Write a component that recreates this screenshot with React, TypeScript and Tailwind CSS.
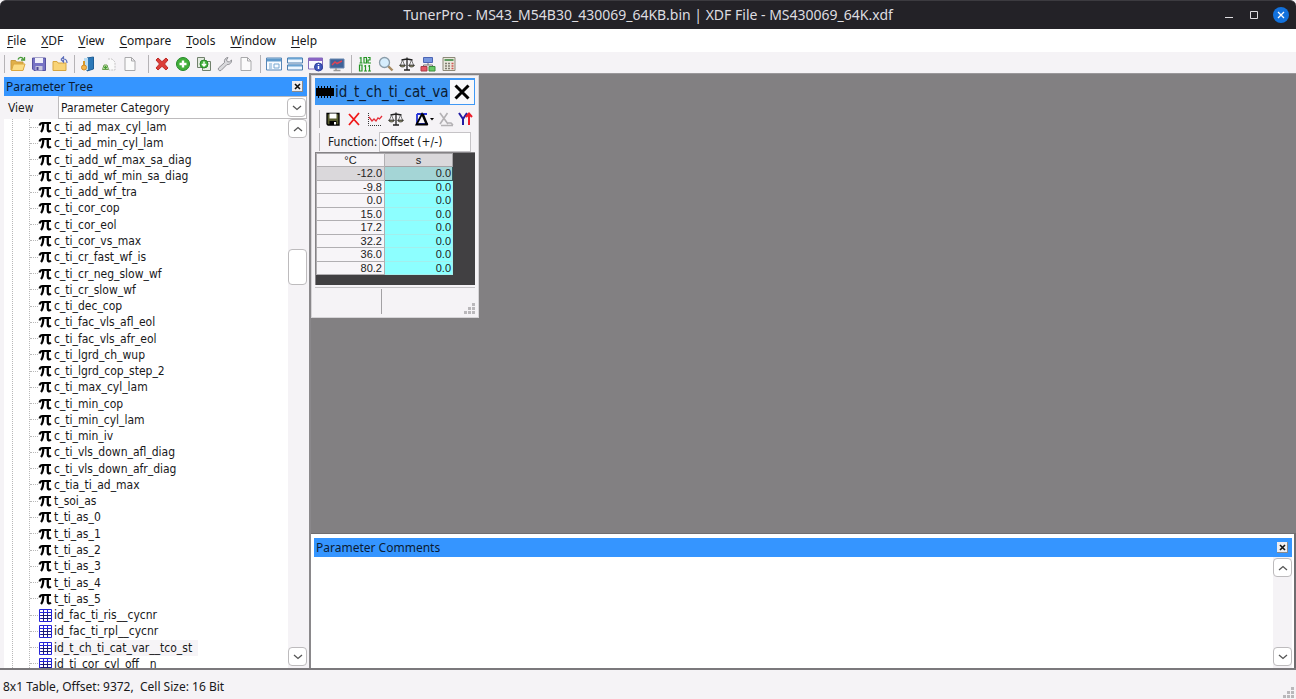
import type { ReactNode } from 'react';

const parameters = [
  'c_ti_ad_max_cyl_lam', 'c_ti_ad_min_cyl_lam', 'c_ti_add_wf_max_sa_diag', 'c_ti_add_wf_min_sa_diag',
  'c_ti_add_wf_tra', 'c_ti_cor_cop', 'c_ti_cor_eol', 'c_ti_cor_vs_max', 'c_ti_cr_fast_wf_is',
  'c_ti_cr_neg_slow_wf', 'c_ti_cr_slow_wf', 'c_ti_dec_cop', 'c_ti_fac_vls_afl_eol', 'c_ti_fac_vls_afr_eol',
  'c_ti_lgrd_ch_wup', 'c_ti_lgrd_cop_step_2', 'c_ti_max_cyl_lam', 'c_ti_min_cop', 'c_ti_min_cyl_lam',
  'c_ti_min_iv', 'c_ti_vls_down_afl_diag', 'c_ti_vls_down_afr_diag', 'c_tia_ti_ad_max', 't_soi_as',
  't_ti_as_0', 't_ti_as_1', 't_ti_as_2', 't_ti_as_3', 't_ti_as_4', 't_ti_as_5',
];
const tables = ['id_fac_ti_ris__cycnr', 'id_fac_ti_rpl__cycnr', 'id_t_ch_ti_cat_var__tco_st', 'id_ti_cor_cyl_off__n'];
const selectedTable = 'id_t_ch_ti_cat_var__tco_st';
const menus = ['File', 'XDF', 'View', 'Compare', 'Tools', 'Window', 'Help'];
const cells = [
  ['-12.0', '0.0'], ['-9.8', '0.0'], ['0.0', '0.0'], ['15.0', '0.0'],
  ['17.2', '0.0'], ['32.2', '0.0'], ['36.0', '0.0'], ['80.2', '0.0'],
];

function Icon({ children }: { children: ReactNode }) {
  return (
    <svg viewBox="0 0 16 16" className="size-4 shrink-0" fill="none" aria-hidden="true">
      {children}
    </svg>
  );
}

const folder = (
  <>
    <path d="M1 14V4.500h4.500l1 1.500H13v8z" fill="#e0b04a" stroke="#c99a3c" />
    <path d="M1.500 14.500 3.500 8H15l-2 6.500z" fill="#fbdc85" stroke="#dba840" />
  </>
);
const page = <path d="M3 1.500h6.500L13 5v9.500H3zM9.500 1.500V5H13" fill="#fbfbfb" stroke="#a9a9ab" />;
const scales = (
  <>
    <path d="M8 1.500v12M2.500 4 8 3l5.500 1M5 14h6" stroke="#222" strokeWidth="1.300" />
    <path d="M3.500 4 1.500 9M3.500 4l2 5M12.500 4l-2 5M12.500 4l2 5" stroke="#555" strokeWidth=".8" />
    <path d="M.7 9.200h5.600c-.6 2.200-5 2.200-5.600 0zM9.700 9.200h5.600c-.6 2.200-5 2.200-5.600 0z" fill="#d9d78a" stroke="#222" />
  </>
);

const toolbarGroups: { label: string; icon: ReactNode }[][] = [
  [
    { label: 'Open bin', icon: <>{folder}<path d="M8 3.500C9 1 12 .5 13.500 3.500M14.500 1v3H11" stroke="#4a9b3b" strokeWidth="1.300" /></> },
    { label: 'Save bin', icon: <><path d="M1.500 2h13v12.500H3L1.500 13z" fill="#7773c4" stroke="#5652a0" /><path d="M4 2h8v5H4z" fill="#f0f0fa" /><path d="M4.500 10h7v4.500h-7z" fill="#c9c8de" /><path d="M5.500 11h2v3h-2z" fill="#4b4793" /></> },
    { label: 'Close bin', icon: <><path d="M1 14V5.500h4l1 1.500h8v7.500H1z" fill="#f8d377" stroke="#d7a640" /><path d="M9 3.500 11.500 1v2c2 0 3.500 1 3.500 4M9 3.500 11.500 6V4" stroke="#5a6cb8" strokeWidth="1.200" /></> },
  ],
  [
    { label: 'Open XDF', icon: <><path d="M7 2l6.500-1v12L7 15z" fill="#2c78b8" stroke="#1f5f98" /><path d="M4 2h4v12H4z" fill="#b9dcf2" /><path d="M4 5v5" stroke="#d89a2a" strokeWidth="2" /><circle cx="4" cy="11.500" r="2.500" fill="#f5b64a" stroke="#d08a28" /></> },
    { label: 'New XDF', icon: <><path d="M7 3h4l3 3v8H8" fill="#fafafa" stroke="#c4c4c4" strokeDasharray="2 1" /><path d="M1.500 13.500 3 9h3l1.500 4.500z" fill="#d8edc8" stroke="#6a9e4e" /><path d="M4.500 10v3M3 11.500h3" stroke="#449e31" strokeWidth="1.300" /></> },
    { label: 'New page', icon: page },
  ],
  [
    { label: 'Delete', icon: <path d="m2 4 2-2 4 3.700L12 2l2 2-3.500 4 3.500 4-2 2-4-3.700L4 14l-2-2 3.500-4z" fill="#dc3e38" stroke="#bf2a27" /> },
    { label: 'Add', icon: <><circle cx="8" cy="8" r="6.500" fill="#42af3a" stroke="#258829" /><path d="M8 4.500v7M4.500 8h7" stroke="#fff" strokeWidth="2.400" /></> },
    { label: 'Duplicate', icon: <><path d="M1.500 1.500h7v10h-7z" fill="#e2ebdf" stroke="#71806c" /><path d="M6.500 5.500h8v9h-8z" fill="#e9efe5" stroke="#71806c" /><circle cx="8" cy="8" r="4" fill="#45b43d" stroke="#2c882b" /><path d="M8 5.500V10M6 8l2 2 2-2" stroke="#fff" strokeWidth="1.400" /></> },
    { label: 'Settings', icon: <path d="m1.500 12 6-5.500c-.7-2.500 1-5 3.500-5L9.500 4l1 1.800h2L14.500 4c.5 2.700-2 5-4.500 4.500L4 14.500c-1.500 1-3.500-1-2.500-2.500z" fill="#d9d9dc" stroke="#929297" /> },
    { label: 'Blank document', icon: page },
  ],
  [
    { label: 'Tree pane', icon: <><path d="M.5 2h15v12H.5z" fill="#f7fbff" stroke="#5787b8" /><path d="M1 2.500h14v3H1z" fill="#609acb" /><path d="M3 8h3M3 10h3M3 12h3M8 8h5v4H8z" stroke="#78a9d2" /></> },
    { label: 'Split panes', icon: <><path d="M.5 2h15v5H.5zM.5 9h15v5H.5z" fill="#eef7ff" stroke="#4e7fae" /><path d="M1 2.500h14M1 9.500h14" stroke="#6ba4d3" strokeWidth="2" /></> },
    { label: 'Information', icon: <><path d="M.5 2h14v11H.5z" fill="#faf9ff" stroke="#836dbb" /><path d="M1 3.500h13" stroke="#8b65c4" strokeWidth="3" /><circle cx="10.500" cy="11" r="4" fill="#4056bd" stroke="#31449a" /><path d="M10.500 10v3M10.500 8v1" stroke="#fff" strokeWidth="1.500" /></> },
    { label: 'Monitor', icon: <><path d="M1 3h14v9H1z" fill="#3f6299" stroke="#6686ae" /><path d="m3 9 3-3 2 1.500L13 5" stroke="#df4355" strokeWidth="1.500" /><path d="M7 12v2M4.500 14.500h7" stroke="#999" strokeWidth="1.500" /></> },
  ],
  [
    { label: 'Hex editor', icon: <path d="M4 1v6M2.500 2H4M2.500 7h3M7 1.500h2.500V7H7zM11 1.500h2v2.500h-2v3h3M2.500 9H5v6H2.500zM8.500 9v6M7 10h1.500M7 15h3M12.500 9v6M11 10h1.500M11 15h3" stroke="#259525" strokeWidth="1.200" /> },
    { label: 'Find', icon: <><path d="m10 10 4.500 4.500" stroke="#a78a61" strokeWidth="2.400" /><circle cx="6.500" cy="6.500" r="5" fill="#d6edfc" stroke="#8a9ca9" strokeWidth="1.300" /></> },
    { label: 'Compare', icon: scales },
    { label: 'Diagram', icon: <><path d="M3.500 1.500h9v5h-9z" fill="#7797de" stroke="#4c65b5" /><path d="M8 7v2M3.500 11V9h9v2" stroke="#777" /><path d="M1 10.500h6v4.500H1z" fill="#e45867" stroke="#a83b45" /><path d="M9 10.500h6v4.500H9z" fill="#69ca68" stroke="#3b8d3b" /></> },
    { label: 'Calculator', icon: <><path d="M2 1.500h12v13H2z" fill="#e9e7dc" stroke="#8d8978" /><path d="M3.500 3h9v2h-9z" fill="#5f9a60" /><path d="M4 7.500h2M7 7.500h2M4 10h2M7 10h2M4 12.500h2M7 12.500h2" stroke="#817d70" strokeWidth="1.300" /><path d="M10.500 7.500h2M10.500 10h2M10.500 12.500h2" stroke="#cf5650" strokeWidth="1.300" /></> },
  ],
];

function Grip() {
  return <span className="h-[18px] w-px shrink-0 bg-[#b5b3b6]" />;
}

function PiIcon() {
  return (
    <svg viewBox="0 0 14 12" className="h-3 w-3.5 shrink-0" fill="none" stroke="#000" aria-hidden="true">
      <path d="M1.500 4.500C2 2.500 3 2 4.500 2H13" strokeWidth="2" />
      <path d="M5.300 2c0 4-.5 7-2.300 9M9.800 2v6.500c0 2 1.500 2.500 3 1" strokeWidth="2.300" />
    </svg>
  );
}

function GridIcon() {
  return (
    <svg viewBox="0 0 14 14" className="size-3.5 shrink-0" fill="#fff" aria-hidden="true">
      <path d="M1.500 1.500h12v12h-12zM5.500 1v12M9.500 1v12M1 4.500h12M1 7.500h12M1 10.500h12" stroke="#2524d8" />
      <path d="M5.500 5v8M9.500 5v8M3 7.500h10M3 10.500h10" stroke="#16165c" strokeWidth=".7" />
    </svg>
  );
}

function Chevron({ up = false }: { up?: boolean }) {
  return (
    <svg viewBox="0 0 10 6" className="h-1.5 w-2.5" fill="none" stroke="#555" strokeWidth="1.300" aria-hidden="true">
      <path d={up ? 'm1 5 4-3.500L9 5' : 'm1 1 4 3.500L9 1'} />
    </svg>
  );
}

function ScrollButton({ up = false }: { up?: boolean }) {
  return (
    <button aria-label={up ? 'Scroll up' : 'Scroll down'} className="flex size-[19px] shrink-0 items-center justify-center rounded-sm border border-[#bdbbbd] bg-white">
      <Chevron up={up} />
    </button>
  );
}

function PaneHeader({ title }: { title: string }) {
  return (
    <header className="flex h-[19px] shrink-0 items-center justify-between bg-[#3595ff] pr-1 pl-0.5">
      <h2 className="font-['Noto_Sans','Open_Sans',sans-serif] text-[12px] leading-4 text-[#0b1c33]">{title}</h2>
      <button aria-label={`Close ${title}`} className="flex size-[11px] items-center justify-center border-r border-b border-[#8a8a8a] bg-[#efedef]">
        <svg viewBox="0 0 7 7" className="size-[7px]" stroke="#111" strokeWidth="1.600" aria-hidden="true"><path d="m1 1 5 5M6 1 1 6" /></svg>
      </button>
    </header>
  );
}

function SizeGrip() {
  return (
    <svg viewBox="0 0 11 11" className="size-[11px]" fill="#bab8bb" aria-hidden="true">
      <path d="M8 0h3v3H8zM4 4h3v3H4zM8 4h3v3H8zM0 8h3v3H0zM4 8h3v3H4zM8 8h3v3H8z" />
    </svg>
  );
}

function TitleBar() {
  return (
    <div className="grid h-[29px] shrink-0 grid-cols-[1fr_auto_1fr] items-center rounded-t-md border-t border-[#3c3b40] bg-[#232227] pb-px text-[#dedde0]">
      <h1 className="col-start-2 font-['Noto_Sans','Open_Sans',sans-serif] text-[14px] leading-5">TunerPro - MS43_M54B30_430069_64KB.bin | XDF File - MS430069_64K.xdf</h1>
      <div className="flex items-center justify-end gap-[13px] pr-[7px]">
        <button aria-label="Minimize" className="flex h-4 w-3 items-center justify-center">
          <svg viewBox="0 0 12 12" className="size-3" stroke="currentColor" aria-hidden="true"><path d="M2 8.500h8" /></svg>
        </button>
        <button aria-label="Maximize" className="flex h-4 w-3 items-center justify-center">
          <svg viewBox="0 0 12 12" className="size-3" fill="none" stroke="currentColor" aria-hidden="true"><path d="M2.500 2.500h7v7h-7z" /></svg>
        </button>
        <button aria-label="Close" className="flex size-4 items-center justify-center rounded-full bg-[#1271dc]">
          <svg viewBox="0 0 8 8" className="size-2" stroke="#fff" strokeWidth="1.300" aria-hidden="true"><path d="m1 1 6 6M7 1 1 7" /></svg>
        </button>
      </div>
    </div>
  );
}

function MenuBar() {
  return (
    <nav className="flex h-[23px] shrink-0 items-center gap-[15px] bg-white pl-[7px] font-['Noto_Sans','Open_Sans',sans-serif] text-[12px] leading-4">
      {menus.map((name) => (
        <button key={name}><span className="underline underline-offset-2">{name[0]}</span>{name.slice(1)}</button>
      ))}
    </nav>
  );
}

function Toolbar() {
  return (
    <div className="flex h-[21px] shrink-0 items-end gap-1 pl-1">
      {toolbarGroups.map((group, i) => (
        <div key={i} className={i === 1 ? 'flex items-center gap-0.5 pr-1' : 'flex items-center gap-0.5'}>
          <Grip />
          <div className="flex">
            {group.map(({ label, icon }) => (
              <button key={label} aria-label={label} className="flex h-[18px] w-[21px] items-center justify-center"><Icon>{icon}</Icon></button>
            ))}
          </div>
        </div>
      ))}
    </div>
  );
}

function TreeRow({ name, table = false }: { name: string; table?: boolean }) {
  return (
    <li className="flex min-h-0 items-center whitespace-nowrap">
      <span className="w-2 shrink-0 border-t border-dotted border-[#b8b8b8]" />
      <button className="flex items-center gap-0.5">
        {table ? <GridIcon /> : <PiIcon />}
        <span className={name === selectedTable ? 'bg-[#f6f4f7] pr-1.5' : ''}>{name}</span>
      </button>
    </li>
  );
}

function ParameterTree() {
  return (
    <aside className="flex w-[311px] shrink-0 flex-col border-r-2 border-[#8a888b] pt-1 pr-0.5 pl-1">
      <PaneHeader title="Parameter Tree" />
      <div className="flex h-[23px] shrink-0 items-center">
        <label htmlFor="view" className="w-[54px] pl-1 text-[12px] leading-4">View</label>
        <div className="flex h-full flex-1 items-center border border-[#bdbbbd] bg-white">
          <select id="view" className="min-w-0 flex-1 appearance-none bg-transparent pl-0.5 text-[12px] leading-4">
            <option>Parameter Category</option>
          </select>
          <span className="flex size-[19px] items-center justify-center rounded-sm border border-[#bdbbbd]"><Chevron /></span>
        </div>
      </div>
      <div className="flex min-h-0 flex-1 bg-white">
        <div className="min-w-0 flex-1 overflow-hidden pl-2">
          <div className="border-l border-dotted border-[#b8b8b8] pl-4">
            <ul className="grid h-[553px] auto-rows-fr border-l border-dotted border-[#b8b8b8] text-[12px] leading-4">
              {parameters.map((name) => <TreeRow key={name} name={name} />)}
              {tables.map((name) => <TreeRow key={name} name={name} table />)}
            </ul>
          </div>
        </div>
        <div className="flex flex-col bg-[#f5f3f6] pb-0.5">
          <ScrollButton up />
          <div className="grid flex-1 grid-rows-[111fr_36fr_362fr]">
            <span className="row-start-2 rounded-sm border border-[#bdbbbd] bg-white" />
          </div>
          <ScrollButton />
        </div>
      </div>
    </aside>
  );
}

const tableTools: { label: string; icon: ReactNode }[] = [
  { label: 'Save table', icon: <><path d="M2 2.500h12v11.500H3L2 13z" fill="#575b2e" stroke="#000" strokeWidth="1.300" /><path d="M4.500 2.500h7v5h-7z" fill="#fff" /><path d="M4.500 10h7v4h-7z" fill="#000" /><path d="M9 11h2v2.500H9z" fill="#fff" /></> },
  { label: 'Discard', icon: <path d="m3 3 10 11M13 2 3 14" stroke="#f01818" strokeWidth="1.800" /> },
  { label: 'Graph', icon: <><path d="M1.500 2v12.500H15" stroke="#333" strokeDasharray="1 1" /><path d="m2 6 3 4 2-2 2 2 2-3 1.500 1L15 5" stroke="#e52e38" strokeWidth="1.300" /></> },
  { label: 'Compare table', icon: scales },
];

function TableWindow() {
  return (
    <section className="absolute top-px left-0 flex w-[168px] flex-col border border-[#d6d4d7] bg-[#f5f3f6] px-[3px] pt-0.5 pb-0.5">
      <header className="flex h-[27px] items-center bg-[#3f98f5] pr-px">
        <svg viewBox="0 0 20 14" className="h-3.5 w-5 shrink-0" aria-hidden="true">
          <path d="M1 3h18v8H1z" />
          <path d="M3.500 1v12M6.500 1v12M9.500 1v12M12.500 1v12M15.500 1v12" stroke="#000" />
        </svg>
        <h2 className="min-w-0 flex-1 text-[15px] leading-5 whitespace-nowrap text-[#0b1c33]">id_t_ch_ti_cat_va</h2>
        <button aria-label="Close table" className="flex size-6 shrink-0 items-center justify-center bg-[#f8f8fa]">
          <svg viewBox="0 0 16 16" className="size-4" stroke="#000" strokeWidth="3" aria-hidden="true"><path d="m1.500 1.500 13 13M14.500 1.500l-13 13" /></svg>
        </button>
      </header>
      <div className="flex h-[27px] items-center overflow-hidden pl-1">
        <Grip />
        <div className="flex pl-0.5">
          {tableTools.map(({ label, icon }) => (
            <button key={label} aria-label={label} className="flex w-[21px] justify-center"><Icon>{icon}</Icon></button>
          ))}
        </div>
        <button aria-label="Trace" className="ml-2 flex w-[21px] items-center justify-center">
          <svg viewBox="0 0 20 16" className="h-4 w-5" fill="none" aria-hidden="true">
            <path d="M3 3h10M3 3v10h11" stroke="#2634d8" strokeWidth="1.800" />
            <path d="M2.500 13.500 8 3l4.500 10.500zM9 3l4.500 11" stroke="#000" strokeWidth="1.800" />
            <path d="M16 7h4l-2 2.500z" fill="#000" />
          </svg>
        </button>
        <button aria-label="X axis" className="ml-0.5 flex w-[21px] justify-center">
          <Icon><path d="m2 2 8 11M9.500 2 2 13M3 14.500h12M10 12h3l2 2" stroke="#b3b1b4" strokeWidth="1.600" /></Icon>
        </button>
        <button aria-label="Y axis" className="flex w-[21px] justify-center">
          <Icon><path d="m2 2 4 6 4-6M6 8v6" stroke="#211ba3" strokeWidth="2" /><path d="M12 14V3M9 6l3-3.500L15 6" stroke="#ed1c2a" strokeWidth="2" /></Icon>
        </button>
      </div>
      <div className="flex h-5 items-center pl-1">
        <Grip />
        <label htmlFor="function" className="pr-px pl-2 text-[12px] leading-4">Function:</label>
        <select id="function" className="h-5 min-w-0 flex-1 appearance-none border border-[#c5c3c6] bg-white pl-0.5 text-[12px] leading-4">
          <option>Offset (+/-)</option>
        </select>
        <span className="w-1" />
      </div>
      <div className="h-[133px] border-t border-l border-[#858386] bg-[#414042]">
        <table className="h-[122px] w-[137px] table-fixed border-collapse font-['Liberation_Sans',Arial,sans-serif] text-[11px] leading-3 text-[#222]">
          <thead>
            <tr className="h-3">
              <th scope="col" className="border border-[#b1afb2] bg-[#f5f3f6] p-0 font-normal">°C</th>
              <th scope="col" className="border border-[#a5a3a6] bg-[#dad8db] p-0 font-normal">s</th>
            </tr>
          </thead>
          <tbody>
            {cells.map(([axis, value], i) => (
              <tr key={axis}>
                <th scope="row" className={i === 0 ? 'border border-[#b1afb2] bg-[#dad8db] p-0 pr-0.5 text-right font-normal' : 'border border-[#b1afb2] bg-[#f7f5f8] p-0 pr-0.5 text-right font-normal'}>{axis}</th>
                <td className={i === 0 ? 'border border-[#33595a] bg-[#a4d5d6] p-0 pr-px text-right' : 'border border-[#a3efed] bg-[#8dffff] p-0 pr-px text-right'}>{value}</td>
              </tr>
            ))}
          </tbody>
        </table>
      </div>
      <footer className="mt-0.5 flex h-[28px] border-t border-[#c5c3c6]">
        <span className="my-px w-[67px] border-r border-[#a3a1a4]" />
        <span className="flex flex-1 items-end justify-end pb-px"><SizeGrip /></span>
      </footer>
    </section>
  );
}

function CommentsPane() {
  return (
    <section className="flex h-[135px] shrink-0 flex-col border-t border-r-2 border-[#6f6d70] bg-white pt-1 pr-0.5 pl-[3px]">
      <PaneHeader title="Parameter Comments" />
      <div className="flex flex-1">
        <textarea aria-label="Parameter Comments" className="min-w-0 flex-1 resize-none bg-white" />
        <div className="flex flex-col justify-between bg-[#f5f3f6] pt-px pb-0.5">
          <ScrollButton up />
          <ScrollButton />
        </div>
      </div>
    </section>
  );
}

export default function App() {
  return (
    <div className="flex h-screen flex-col bg-[#f5f3f6] font-['DejaVu_Sans_Condensed','Noto_Sans',sans-serif] text-[#18181a]">
      <TitleBar />
      <MenuBar />
      <Toolbar />
      <main className="flex min-h-0 flex-1 border-b-2 border-[#7b797c]">
        <ParameterTree />
        <div className="flex min-w-0 flex-1 flex-col border-t border-[#9a989b]">
          <div className="relative flex-1 bg-[#828082]">
            <TableWindow />
          </div>
          <CommentsPane />
        </div>
      </main>
      <footer className="flex h-[29px] shrink-0 items-center justify-between pr-0.5 pl-[3px] font-['Noto_Sans','Open_Sans',sans-serif] text-[12px] leading-4">
        <p className="whitespace-pre pt-1">8x1 Table, Offset: 9372,  Cell Size: 16 Bit</p>
        <span className="self-end pb-px"><SizeGrip /></span>
      </footer>
    </div>
  );
}
